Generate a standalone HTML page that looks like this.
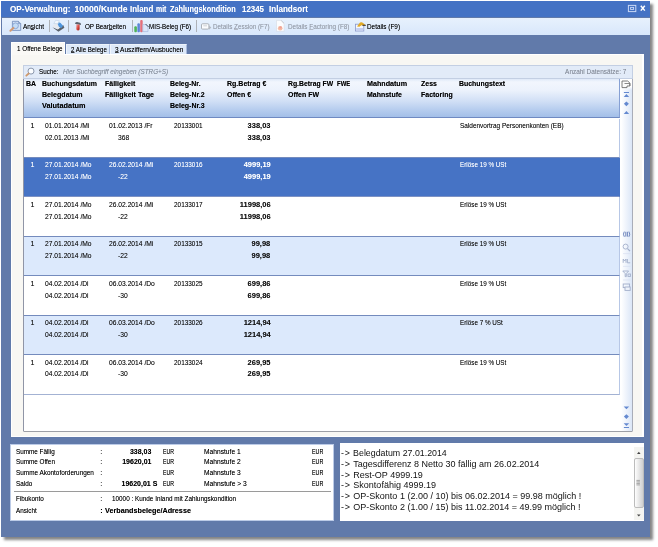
<!DOCTYPE html>
<html lang="de">
<head>
<meta charset="utf-8">
<title>OP-Verwaltung</title>
<style>
html,body{margin:0;padding:0;background:#fff;}
body{width:658px;height:547px;position:relative;overflow:hidden;font-family:"Liberation Sans",sans-serif;}
.abs,.t,.row{position:absolute;}
.t{white-space:pre;line-height:12px;color:#000;transform-origin:0 50%;text-shadow:0 0 0.4px color-mix(in srgb,currentColor 45%,transparent);}
.t u{text-decoration-thickness:0.6px;text-underline-offset:0px;text-decoration-color:rgba(0,0,0,.55);}
.t.g u{text-decoration-color:#b3bac6;}
#txt{position:absolute;left:0;top:0;width:658px;height:547px;will-change:transform;}
#win{left:1px;top:1px;width:649px;height:536px;background:#617aaa;box-shadow:3px 3px 2.5px rgba(0,0,0,.48);}
#title{left:1px;top:1px;width:649px;height:15.8px;background:#4472c4;}
#tool{left:2.3px;top:17.7px;width:647.4px;height:17.6px;background:linear-gradient(#e7f1fd,#d8e7fb);}
.sep{position:absolute;top:19.5px;width:1px;height:12.5px;background:#aeb2b8;}
#panel{left:10.6px;top:54px;width:633.4px;height:382.5px;background:#f8f7f3;border:1px solid #fff;border-right-width:2px;box-sizing:border-box;}
.tab{position:absolute;box-sizing:border-box;}
#tab1{left:10.6px;top:42.3px;width:54.9px;height:13px;background:#faf9f6;border:1px solid #fff;border-bottom:none;}
#tab2{left:65.8px;top:44px;width:44px;height:10.2px;background:#dde9f9;border-left:1px solid #f0f5fc;border-top:1px solid #edf3fb;border-right:1px solid #a7b9db;}
#tab3{left:109.8px;top:44px;width:77.6px;height:10.2px;background:#dde9f9;border-left:1px solid #f0f5fc;border-top:1px solid #edf3fb;border-right:1px solid #a7b9db;}
#search{left:22.5px;top:64.7px;width:610px;height:14.3px;background:#e2ebf8;border:1px solid #c3cfe3;box-sizing:border-box;}
#grid{left:22.5px;top:79px;width:610px;height:352.7px;background:#fff;border:1px solid #a9adb8;border-left-color:#9095a6;border-bottom-color:#9d9fa6;border-radius:0 0 1.5px 1.5px;border-top:none;box-sizing:border-box;}
#head{left:23.5px;top:79px;width:596.3px;height:39.2px;border-right:1px solid #86a0d4;background:linear-gradient(#dfe9f8 0%,#f2f6fd 8%,#ecf2fc 30%,#cfdef5 60%,#b5ccee 82%,#a3bfe8 100%);border-bottom:1px solid #6f8ac2;box-sizing:border-box;}
#nav{left:620px;top:79px;width:11.7px;height:351.7px;background:linear-gradient(90deg,#fff 10%,#dbe6f7);}
#navtop{left:620px;top:79px;width:11.7px;height:11px;background:linear-gradient(#fff 70%,rgba(255,255,255,0));}
.row{left:23.5px;width:596.3px;background:#fff;border-bottom:1px solid #748bbd;border-right:1px solid #b7c7e6;box-sizing:border-box;}
.row.alt{background:#dce9fc;}
.row.sel{background:#4673c5;border-bottom-color:#7d92c4;border-right-color:#4673c5;}
.row.last{border-bottom-color:#a3b2d3;}
#bl{left:10px;top:443.5px;width:323.8px;height:77px;background:#fff;border:1px solid #bccbe7;box-sizing:border-box;}
#br{left:340.2px;top:443px;width:304px;height:77.6px;background:#fff;}
#blsep{left:13.5px;top:491px;width:317px;height:1px;background:#9a9a9a;}
#sb{left:634px;top:447px;width:10px;height:73px;background:#f4f4f1;}
#thumb{left:634px;top:458px;width:10px;height:50px;background:linear-gradient(90deg,#fefefe,#cfcfcf);border:1px solid #bcbcbc;border-radius:2px;box-sizing:border-box;}
</style>
</head>
<body>
<div id="win" class="abs"></div>
<div id="title" class="abs"></div>
<div id="tool" class="abs"></div>
<div class="sep" style="left:49px"></div>
<div class="sep" style="left:68.3px"></div>
<div class="sep" style="left:131.8px"></div>
<div class="sep" style="left:196.3px"></div>
<div id="panel" class="abs"></div>
<div id="tab1" class="tab"></div>
<div id="tab2" class="tab"></div>
<div id="tab3" class="tab"></div>
<div id="search" class="abs"></div>
<div id="grid" class="abs"></div>
<div id="head" class="abs"></div>
<div class="row" style="top:118.5px;height:39.43px"></div>
<div class="row sel" style="top:157.93px;height:39.43px"></div>
<div class="row" style="top:197.36px;height:39.43px"></div>
<div class="row alt" style="top:236.79px;height:39.43px"></div>
<div class="row" style="top:276.22px;height:39.43px"></div>
<div class="row alt" style="top:315.65px;height:39.43px"></div>
<div class="row last" style="top:355.08px;height:39.43px"></div>
<div id="nav" class="abs"></div>
<div id="navtop" class="abs"></div>
<div id="bl" class="abs"></div>
<div id="blsep" class="abs"></div>
<div id="br" class="abs"></div>
<div id="sb" class="abs"></div>
<div id="thumb" class="abs"></div>
<svg class="abs" style="left:0;top:0" width="658" height="547" viewBox="0 0 658 547">
<!-- title buttons -->
<rect x="628.4" y="5.4" width="7.4" height="6.2" fill="none" stroke="#c9d8f6" stroke-width="1"/>
<rect x="630.6" y="7.4" width="3" height="2" fill="#4472c4" stroke="#c9d8f6" stroke-width="0.9"/>
<path d="M640.8 5.7 L644.8 10.6 M644.8 5.7 L640.8 10.6" stroke="#fff" stroke-width="1.5" fill="none"/>
<!-- preview icon -->
<path d="M12.4 21.3 H18.4 L20.7 23.6 V30.4 H12.4 Z" fill="#d3e3f7" stroke="#6d88b8" stroke-width="0.8"/>
<path d="M18.4 21.3 V23.6 H20.7" fill="none" stroke="#6d88b8" stroke-width="0.7"/>
<circle cx="15.5" cy="25.8" r="2.9" fill="#c3dcf6" stroke="#7d9acb" stroke-width="0.8"/>
<path d="M13.4 28 L10.4 30.8" stroke="#d59a72" stroke-width="2" stroke-linecap="round"/>
<!-- printer icon -->
<defs><linearGradient id="hg" x1="0" x2="1" y1="0" y2="1"><stop offset="0" stop-color="#f2a4a4"/><stop offset="0.55" stop-color="#d8453c"/><stop offset="1" stop-color="#8e1f1c"/></linearGradient></defs>
<path d="M52.4 27.2 L58.4 31.7 L64.4 27.8 L63.2 25 L58 29.2 Z" fill="#5a626c"/>
<path d="M52.2 26.6 L55 23.4 L59.2 24.4 L60.2 27.4 L57.6 29.6 Z" fill="#e6eaf0"/>
<path d="M58 22 L60.6 23 L63 25.8 L61.4 27.9 L59 26.9 L57.6 23.8 Z" fill="#4f96dc"/>
<path d="M53.8 23.6 L55.6 20.3 L59.3 20.7 L58.2 23.7 Z" fill="#f1f7fd" stroke="#b4c8e0" stroke-width="0.5"/>
<!-- hammer -->
<path d="M74.9 23.6 Q75.2 22 77 22.1 L80 22.7 Q81.2 23.2 80.9 25 L79.4 24.8 L76.4 24.3 Z" fill="#59626d"/>
<path d="M76.3 24.4 H79.6 V29 Q79.4 30.5 77.9 30.5 Q76.3 30.4 76.3 29 Z" fill="url(#hg)"/>
<!-- chart icon -->
<rect x="134.3" y="26.3" width="2.6" height="5.9" rx="1" fill="#4fb45a"/>
<rect x="137.4" y="23.3" width="2.5" height="8.9" rx="1" fill="#5d86d6"/>
<rect x="140.2" y="20" width="2.5" height="12.2" rx="1" fill="#e46f7a"/>
<path d="M142.8 24.6 H146 L148 26.6 V31.6 H142.8 Z" fill="#dbe6f8" stroke="#9eb2da" stroke-width="0.6"/>
<path d="M145.6 24 L148.6 27" stroke="#3b4453" stroke-width="0.9"/>
<!-- zession icon (gray) -->
<rect x="201.5" y="23.8" width="7.4" height="5.3" rx="1" fill="#fbfcfe" stroke="#a4a9b0" stroke-width="0.9"/>
<path d="M203.3 25.8 H207" stroke="#c3c7cc" stroke-width="0.8"/>
<path d="M209 25.6 L211.3 27.6 L209 29.8 Z" fill="#b4b9c0"/>
<!-- factoring icon (gray) -->
<path d="M276.5 20.4 H281.4 L284.1 23.2 V31.3 H276.5 Z" fill="#fbfcfe" stroke="#d5dae2" stroke-width="0.6"/>
<path d="M281.2 20.6 L284 23.4" stroke="#b9bec6" stroke-width="0.8"/>
<circle cx="280.2" cy="28.2" r="2.3" fill="#f5bca6"/>
<circle cx="280.5" cy="27.4" r="1.2" fill="#f0a194"/>
<!-- details icon -->
<rect x="355.5" y="24.2" width="8.3" height="6.8" fill="#f4f7fd" stroke="#8796ca" stroke-width="0.8"/>
<rect x="356.2" y="28" width="7" height="2.6" fill="#c5cff0"/>
<path d="M357 26.4 L360 22.6 Q362 21.6 363 23 L365.6 25.2 L361.5 25.2 L359.4 26.8 Z" fill="#e2aa25"/>
<path d="M362.4 24.8 L365.8 24.8 L365.8 25.8 L362.4 25.8 Z" fill="#3a2f22"/>
<!-- search magnifier -->
<circle cx="31" cy="71.1" r="3" fill="#fbfdff" stroke="#8b98ad" stroke-width="1"/>
<path d="M28.7 73.5 L26.3 75.7" stroke="#cf9a6c" stroke-width="1.8" stroke-linecap="round"/>
<!-- nav strip top -->
<path d="M622 81 H627.6 L629.9 83 V86 H627 V87.6 H622 Z" fill="#fcfcfc" stroke="#6d6d6d" stroke-width="0.9"/>
<path d="M624.5 83.5 H629.8 V86" fill="none" stroke="#6d6d6d" stroke-width="0.8"/>
<g fill="#6489d0">
<rect x="623.9" y="92" width="5.1" height="1"/>
<path d="M623.7 96.9 L626.4 94 L629.2 96.9 Z"/>
<path d="M623.9 103.8 L626.4 101.4 L628.9 103.8 L626.4 106.2 Z"/>
<path d="M623.7 113.9 L626.4 111 L629.2 113.9 Z"/>
<path d="M623.7 406.4 L626.4 409.3 L629.2 406.4 Z"/>
<path d="M623.9 416.6 L626.4 414.2 L628.9 416.6 L626.4 419 Z"/>
<path d="M623.7 423.2 L626.4 426.1 L629.2 423.2 Z"/>
<rect x="623.9" y="427" width="5.1" height="1"/>
</g>
<!-- nav strip middle icons -->
<g fill="none" stroke="#6f86bd" stroke-width="1">
<path d="M624.3 231.6 Q622.6 234.2 624.3 236.8"/>
<path d="M628.9 231.6 Q630.6 234.2 628.9 236.8"/>
<path d="M625.8 231.8 V236.6 M627.4 231.8 V236.6"/>
</g>
<g fill="none" stroke="#a3afcb" stroke-width="0.9">
<circle cx="625.6" cy="246.6" r="2.5"/>
<path d="M627.5 248.6 L630 251.2" stroke-width="1.2"/>
<path d="M623 253.6 H630.4" stroke="#d3dcee" stroke-width="0.6"/>
<path d="M623.2 262.8 V259 L624.6 261 L626 259 V262.8 M627.4 259 V262.8 H630.2" />
<path d="M623 266.4 H630.4" stroke="#d3dcee" stroke-width="0.6"/>
<path d="M622.8 271 H628.6 L626.3 273.6 V276.6 H625.2 V273.6 Z"/>
<rect x="628" y="274" width="2.4" height="2.4"/>
<path d="M623 280 H630.4" stroke="#d3dcee" stroke-width="0.6"/>
<rect x="623.2" y="284" width="6.4" height="3.6"/>
<rect x="625" y="287" width="5.2" height="3.4" fill="#eef3fb"/>
</g>
<!-- scrollbar arrows -->
<path d="M637 454 L638.8 451.8 L640.6 454 Z" fill="#444"/>
<path d="M637 514.4 L638.8 516.6 L640.6 514.4 Z" fill="#444"/>
<path d="M636.4 480.4 H639.9 M636.4 481.9 H639.9 M636.4 483.4 H639.9 M636.4 484.9 H639.9" stroke="#858585" stroke-width="0.7"/>
</svg>

<div id="txt">
<span class="t" style="left:9.9px;top:3px;font-size:8.6px;transform:scaleX(0.943);font-weight:bold;color:#fff;">OP-Verwaltung:</span>
<span class="t" style="left:74.6px;top:3px;font-size:8.6px;font-weight:bold;color:#fff;">10000/Kunde</span>
<span class="t" style="left:130.4px;top:3px;font-size:8.6px;transform:scaleX(0.920);font-weight:bold;color:#fff;">Inland</span>
<span class="t" style="left:156.2px;top:3px;font-size:8.6px;transform:scaleX(0.806);font-weight:bold;color:#fff;">mit</span>
<span class="t" style="left:169.9px;top:3px;font-size:8.6px;transform:scaleX(0.854);font-weight:bold;color:#fff;">Zahlungskondition</span>
<span class="t" style="left:242.4px;top:3px;font-size:8.6px;transform:scaleX(0.916);font-weight:bold;color:#fff;">12345</span>
<span class="t" style="left:269.1px;top:3px;font-size:8.6px;transform:scaleX(0.938);font-weight:bold;color:#fff;">Inlandsort</span>
<span class="t" style="left:22.8px;top:21px;font-size:7.2px;transform:scaleX(0.894);">An<u>s</u>icht</span>
<span class="t" style="left:85.0px;top:21px;font-size:7.2px;transform:scaleX(0.871);">OP Bear<u>b</u>eiten</span>
<span class="t" style="left:148.8px;top:21px;font-size:7.2px;transform:scaleX(0.865);">MIS-Beleg (F6)</span>
<span class="t g" style="left:213.3px;top:21px;font-size:7.2px;transform:scaleX(0.880);color:#959ca8;">Details <u>Z</u>ession (F7)</span>
<span class="t g" style="left:287.8px;top:21px;font-size:7.2px;transform:scaleX(0.890);color:#959ca8;">Details <u>F</u>actoring (F8)</span>
<span class="t" style="left:367.4px;top:21px;font-size:7.2px;transform:scaleX(0.890);">Details (F9)</span>
<span class="t" style="left:16.7px;top:43px;font-size:7.2px;transform:scaleX(0.878);">1 Offene Belege</span>
<span class="t" style="left:71.0px;top:44px;font-size:7.2px;transform:scaleX(0.856);"><u>2</u> Alle Belege</span>
<span class="t" style="left:115.4px;top:44px;font-size:7.2px;transform:scaleX(0.908);"><u>3</u> Ausziffern/Ausbuchen</span>
<span class="t" style="left:38.8px;top:66px;font-size:7.2px;transform:scaleX(0.870);">Suche:</span>
<span class="t" style="left:63.4px;top:66px;font-size:7.2px;transform:scaleX(0.885);font-style:italic;color:#848d9b;">Hier Suchbegriff eingeben (STRG+S)</span>
<span class="t" style="right:31.9px;top:66px;font-size:7.2px;transform-origin:100% 50%;transform:scaleX(0.896);color:#858c99;">Anzahl Datensätze: 7</span>
<span class="t" style="left:26.0px;top:78px;font-size:7.3px;transform:scaleX(0.955);font-weight:bold;">BA</span>
<span class="t" style="left:42.1px;top:78px;font-size:7.3px;transform:scaleX(0.955);font-weight:bold;">Buchungsdatum</span>
<span class="t" style="left:42.1px;top:89px;font-size:7.3px;transform:scaleX(0.972);font-weight:bold;">Belegdatum</span>
<span class="t" style="left:42.1px;top:100px;font-size:7.3px;transform:scaleX(1.004);font-weight:bold;">Valutadatum</span>
<span class="t" style="left:105.4px;top:78px;font-size:7.3px;transform:scaleX(0.955);font-weight:bold;">Fälligkeit</span>
<span class="t" style="left:105.4px;top:89px;font-size:7.3px;transform:scaleX(0.979);font-weight:bold;">Fälligkeit Tage</span>
<span class="t" style="left:170.0px;top:78px;font-size:7.3px;transform:scaleX(0.955);font-weight:bold;">Beleg-Nr.</span>
<span class="t" style="left:170.0px;top:89px;font-size:7.3px;transform:scaleX(0.961);font-weight:bold;">Beleg-Nr.2</span>
<span class="t" style="left:170.0px;top:100px;font-size:7.3px;transform:scaleX(0.961);font-weight:bold;">Beleg-Nr.3</span>
<span class="t" style="left:227.4px;top:78px;font-size:7.3px;transform:scaleX(0.962);font-weight:bold;">Rg.Betrag €</span>
<span class="t" style="left:227.4px;top:89px;font-size:7.3px;transform:scaleX(0.955);font-weight:bold;">Offen €</span>
<span class="t" style="left:287.9px;top:78px;font-size:7.3px;transform:scaleX(0.935);font-weight:bold;">Rg.Betrag FW</span>
<span class="t" style="left:287.9px;top:89px;font-size:7.3px;transform:scaleX(0.955);font-weight:bold;">Offen FW</span>
<span class="t" style="left:336.7px;top:78px;font-size:7.3px;transform:scaleX(0.814);font-weight:bold;">FWE</span>
<span class="t" style="left:366.5px;top:78px;font-size:7.3px;transform:scaleX(0.979);font-weight:bold;">Mahndatum</span>
<span class="t" style="left:366.5px;top:89px;font-size:7.3px;transform:scaleX(0.955);font-weight:bold;">Mahnstufe</span>
<span class="t" style="left:420.7px;top:78px;font-size:7.3px;transform:scaleX(0.955);font-weight:bold;">Zess</span>
<span class="t" style="left:420.7px;top:89px;font-size:7.3px;transform:scaleX(0.955);font-weight:bold;">Factoring</span>
<span class="t" style="left:458.7px;top:78px;font-size:7.3px;transform:scaleX(0.949);font-weight:bold;">Buchungstext</span>
<span class="t" style="left:30.6px;top:120px;font-size:7.1px;color:#111;">1</span>
<span class="t" style="left:45.4px;top:120px;font-size:7.1px;transform:scaleX(0.945);color:#111;">01.01.2014 /Mi</span>
<span class="t" style="left:45.4px;top:132px;font-size:7.1px;transform:scaleX(0.945);color:#111;">02.01.2013 /Mi</span>
<span class="t" style="left:109.2px;top:120px;font-size:7.1px;transform:scaleX(0.945);color:#111;">01.02.2013 /Fr</span>
<span class="t" style="left:117.5px;top:132px;font-size:7.1px;transform:scaleX(0.945);color:#111;">368</span>
<span class="t" style="left:173.8px;top:120px;font-size:7.1px;transform:scaleX(0.905);color:#111;">20133001</span>
<span class="t" style="right:387.6px;top:120px;font-size:7.7px;transform-origin:100% 50%;transform:scaleX(0.975);font-weight:bold;color:#111;">338,03</span>
<span class="t" style="right:387.6px;top:132px;font-size:7.7px;transform-origin:100% 50%;transform:scaleX(0.975);font-weight:bold;color:#111;">338,03</span>
<span class="t" style="left:459.7px;top:120px;font-size:7.1px;transform:scaleX(0.909);color:#111;">Saldenvortrag Personenkonten (EB)</span>
<span class="t" style="left:30.6px;top:159px;font-size:7.1px;color:#fff;">1</span>
<span class="t" style="left:45.4px;top:159px;font-size:7.1px;transform:scaleX(0.945);color:#fff;">27.01.2014 /Mo</span>
<span class="t" style="left:45.4px;top:171px;font-size:7.1px;transform:scaleX(0.945);color:#fff;">27.01.2014 /Mo</span>
<span class="t" style="left:109.2px;top:159px;font-size:7.1px;transform:scaleX(0.945);color:#fff;">26.02.2014 /Mi</span>
<span class="t" style="left:117.5px;top:171px;font-size:7.1px;transform:scaleX(0.945);color:#fff;">-22</span>
<span class="t" style="left:173.8px;top:159px;font-size:7.1px;transform:scaleX(0.905);color:#fff;">20133016</span>
<span class="t" style="right:387.6px;top:159px;font-size:7.7px;transform-origin:100% 50%;transform:scaleX(0.975);font-weight:bold;color:#fff;">4999,19</span>
<span class="t" style="right:387.6px;top:171px;font-size:7.7px;transform-origin:100% 50%;transform:scaleX(0.975);font-weight:bold;color:#fff;">4999,19</span>
<span class="t" style="left:459.7px;top:159px;font-size:7.1px;transform:scaleX(0.890);color:#fff;">Erlöse 19 % USt</span>
<span class="t" style="left:30.6px;top:199px;font-size:7.1px;color:#111;">1</span>
<span class="t" style="left:45.4px;top:199px;font-size:7.1px;transform:scaleX(0.945);color:#111;">27.01.2014 /Mo</span>
<span class="t" style="left:45.4px;top:211px;font-size:7.1px;transform:scaleX(0.945);color:#111;">27.01.2014 /Mo</span>
<span class="t" style="left:109.2px;top:199px;font-size:7.1px;transform:scaleX(0.945);color:#111;">26.02.2014 /Mi</span>
<span class="t" style="left:117.5px;top:211px;font-size:7.1px;transform:scaleX(0.945);color:#111;">-22</span>
<span class="t" style="left:173.8px;top:199px;font-size:7.1px;transform:scaleX(0.905);color:#111;">20133017</span>
<span class="t" style="right:387.6px;top:199px;font-size:7.7px;transform-origin:100% 50%;transform:scaleX(0.975);font-weight:bold;color:#111;">11998,06</span>
<span class="t" style="right:387.6px;top:211px;font-size:7.7px;transform-origin:100% 50%;transform:scaleX(0.975);font-weight:bold;color:#111;">11998,06</span>
<span class="t" style="left:459.7px;top:199px;font-size:7.1px;transform:scaleX(0.890);color:#111;">Erlöse 19 % USt</span>
<span class="t" style="left:30.6px;top:238px;font-size:7.1px;color:#111;">1</span>
<span class="t" style="left:45.4px;top:238px;font-size:7.1px;transform:scaleX(0.945);color:#111;">27.01.2014 /Mo</span>
<span class="t" style="left:45.4px;top:250px;font-size:7.1px;transform:scaleX(0.945);color:#111;">27.01.2014 /Mo</span>
<span class="t" style="left:109.2px;top:238px;font-size:7.1px;transform:scaleX(0.945);color:#111;">26.02.2014 /Mi</span>
<span class="t" style="left:117.5px;top:250px;font-size:7.1px;transform:scaleX(0.945);color:#111;">-22</span>
<span class="t" style="left:173.8px;top:238px;font-size:7.1px;transform:scaleX(0.905);color:#111;">20133015</span>
<span class="t" style="right:387.6px;top:238px;font-size:7.7px;transform-origin:100% 50%;transform:scaleX(0.975);font-weight:bold;color:#111;">99,98</span>
<span class="t" style="right:387.6px;top:250px;font-size:7.7px;transform-origin:100% 50%;transform:scaleX(0.975);font-weight:bold;color:#111;">99,98</span>
<span class="t" style="left:459.7px;top:238px;font-size:7.1px;transform:scaleX(0.890);color:#111;">Erlöse 19 % USt</span>
<span class="t" style="left:30.6px;top:278px;font-size:7.1px;color:#111;">1</span>
<span class="t" style="left:45.4px;top:278px;font-size:7.1px;transform:scaleX(0.945);color:#111;">04.02.2014 /Di</span>
<span class="t" style="left:45.4px;top:290px;font-size:7.1px;transform:scaleX(0.945);color:#111;">04.02.2014 /Di</span>
<span class="t" style="left:109.2px;top:278px;font-size:7.1px;transform:scaleX(0.945);color:#111;">06.03.2014 /Do</span>
<span class="t" style="left:117.5px;top:290px;font-size:7.1px;transform:scaleX(0.945);color:#111;">-30</span>
<span class="t" style="left:173.8px;top:278px;font-size:7.1px;transform:scaleX(0.905);color:#111;">20133025</span>
<span class="t" style="right:387.6px;top:278px;font-size:7.7px;transform-origin:100% 50%;transform:scaleX(0.975);font-weight:bold;color:#111;">699,86</span>
<span class="t" style="right:387.6px;top:290px;font-size:7.7px;transform-origin:100% 50%;transform:scaleX(0.975);font-weight:bold;color:#111;">699,86</span>
<span class="t" style="left:459.7px;top:278px;font-size:7.1px;transform:scaleX(0.890);color:#111;">Erlöse 19 % USt</span>
<span class="t" style="left:30.6px;top:317px;font-size:7.1px;color:#111;">1</span>
<span class="t" style="left:45.4px;top:317px;font-size:7.1px;transform:scaleX(0.945);color:#111;">04.02.2014 /Di</span>
<span class="t" style="left:45.4px;top:329px;font-size:7.1px;transform:scaleX(0.945);color:#111;">04.02.2014 /Di</span>
<span class="t" style="left:109.2px;top:317px;font-size:7.1px;transform:scaleX(0.945);color:#111;">06.03.2014 /Do</span>
<span class="t" style="left:117.5px;top:329px;font-size:7.1px;transform:scaleX(0.945);color:#111;">-30</span>
<span class="t" style="left:173.8px;top:317px;font-size:7.1px;transform:scaleX(0.905);color:#111;">20133026</span>
<span class="t" style="right:387.6px;top:317px;font-size:7.7px;transform-origin:100% 50%;transform:scaleX(0.975);font-weight:bold;color:#111;">1214,94</span>
<span class="t" style="right:387.6px;top:329px;font-size:7.7px;transform-origin:100% 50%;transform:scaleX(0.975);font-weight:bold;color:#111;">1214,94</span>
<span class="t" style="left:459.7px;top:317px;font-size:7.1px;transform:scaleX(0.890);color:#111;">Erlöse 7 % USt</span>
<span class="t" style="left:30.6px;top:357px;font-size:7.1px;color:#111;">1</span>
<span class="t" style="left:45.4px;top:357px;font-size:7.1px;transform:scaleX(0.945);color:#111;">04.02.2014 /Di</span>
<span class="t" style="left:45.4px;top:368px;font-size:7.1px;transform:scaleX(0.945);color:#111;">04.02.2014 /Di</span>
<span class="t" style="left:109.2px;top:357px;font-size:7.1px;transform:scaleX(0.945);color:#111;">06.03.2014 /Do</span>
<span class="t" style="left:117.5px;top:368px;font-size:7.1px;transform:scaleX(0.945);color:#111;">-30</span>
<span class="t" style="left:173.8px;top:357px;font-size:7.1px;transform:scaleX(0.905);color:#111;">20133024</span>
<span class="t" style="right:387.6px;top:357px;font-size:7.7px;transform-origin:100% 50%;transform:scaleX(0.975);font-weight:bold;color:#111;">269,95</span>
<span class="t" style="right:387.6px;top:368px;font-size:7.7px;transform-origin:100% 50%;transform:scaleX(0.975);font-weight:bold;color:#111;">269,95</span>
<span class="t" style="left:459.7px;top:357px;font-size:7.1px;transform:scaleX(0.890);color:#111;">Erlöse 19 % USt</span>
<span class="t" style="left:15.7px;top:446px;font-size:7.2px;transform:scaleX(0.880);">Summe Fällig</span>
<span class="t" style="left:100.2px;top:446px;font-size:7.2px;">:</span>
<span class="t" style="right:506.2px;top:446px;font-size:7.3px;transform-origin:100% 50%;transform:scaleX(0.960);font-weight:bold;">338,03</span>
<span class="t" style="left:162.6px;top:446px;font-size:7.2px;transform:scaleX(0.730);">EUR</span>
<span class="t" style="left:204.3px;top:446px;font-size:7.2px;transform:scaleX(0.926);">Mahnstufe 1</span>
<span class="t" style="left:312.4px;top:446px;font-size:7.2px;transform:scaleX(0.750);">EUR</span>
<span class="t" style="left:15.7px;top:456px;font-size:7.2px;transform:scaleX(0.880);">Summe Offen</span>
<span class="t" style="left:100.2px;top:456px;font-size:7.2px;">:</span>
<span class="t" style="right:506.2px;top:456px;font-size:7.3px;transform-origin:100% 50%;transform:scaleX(0.960);font-weight:bold;">19620,01</span>
<span class="t" style="left:162.6px;top:456px;font-size:7.2px;transform:scaleX(0.730);">EUR</span>
<span class="t" style="left:204.3px;top:456px;font-size:7.2px;transform:scaleX(0.926);">Mahnstufe 2</span>
<span class="t" style="left:312.4px;top:456px;font-size:7.2px;transform:scaleX(0.750);">EUR</span>
<span class="t" style="left:15.7px;top:467px;font-size:7.2px;transform:scaleX(0.890);">Summe Akontoforderungen</span>
<span class="t" style="left:100.2px;top:467px;font-size:7.2px;">:</span>
<span class="t" style="left:162.6px;top:467px;font-size:7.2px;transform:scaleX(0.730);">EUR</span>
<span class="t" style="left:204.3px;top:467px;font-size:7.2px;transform:scaleX(0.926);">Mahnstufe 3</span>
<span class="t" style="left:312.4px;top:467px;font-size:7.2px;transform:scaleX(0.750);">EUR</span>
<span class="t" style="left:15.7px;top:478px;font-size:7.2px;transform:scaleX(0.880);">Saldo</span>
<span class="t" style="left:100.2px;top:478px;font-size:7.2px;">:</span>
<span class="t" style="right:500.4px;top:478px;font-size:7.3px;transform-origin:100% 50%;transform:scaleX(0.960);font-weight:bold;">19620,01 S</span>
<span class="t" style="left:162.6px;top:478px;font-size:7.2px;transform:scaleX(0.730);">EUR</span>
<span class="t" style="left:204.3px;top:478px;font-size:7.2px;transform:scaleX(0.936);">Mahnstufe &gt; 3</span>
<span class="t" style="left:312.4px;top:478px;font-size:7.2px;transform:scaleX(0.750);">EUR</span>
<span class="t" style="left:15.7px;top:493px;font-size:7.2px;transform:scaleX(0.880);">Fibukonto</span>
<span class="t" style="left:100.2px;top:493px;font-size:7.2px;">:</span>
<span class="t" style="left:111.6px;top:493px;font-size:7.2px;transform:scaleX(0.885);">10000 : Kunde Inland mit Zahlungskondition</span>
<span class="t" style="left:15.7px;top:505px;font-size:7.2px;transform:scaleX(0.880);">Ansicht</span>
<span class="t" style="left:100.2px;top:505px;font-size:7.3px;font-weight:bold;">:</span>
<span class="t" style="left:105.4px;top:505px;font-size:7.3px;transform:scaleX(0.990);font-weight:bold;">Verbandsbelege/Adresse</span>
<span class="t" style="left:341.0px;top:447px;font-size:9.0px;transform:scaleX(0.980);color:#111;text-shadow:none;"><span style="letter-spacing:0.8px">-&gt;</span> Belegdatum 27.01.2014</span>
<span class="t" style="left:341.0px;top:458px;font-size:9.0px;color:#111;text-shadow:none;"><span style="letter-spacing:0.8px">-&gt;</span> Tagesdifferenz 8 Netto 30 fällig am 26.02.2014</span>
<span class="t" style="left:341.0px;top:469px;font-size:9.0px;color:#111;text-shadow:none;"><span style="letter-spacing:0.8px">-&gt;</span> Rest-OP 4999.19</span>
<span class="t" style="left:341.0px;top:479px;font-size:9.0px;color:#111;text-shadow:none;"><span style="letter-spacing:0.8px">-&gt;</span> Skontofähig 4999.19</span>
<span class="t" style="left:341.0px;top:490px;font-size:9.0px;color:#111;text-shadow:none;"><span style="letter-spacing:0.8px">-&gt;</span> OP-Skonto 1 (2.00 / 10) bis 06.02.2014 = 99.98 möglich !</span>
<span class="t" style="left:341.0px;top:501px;font-size:9.0px;color:#111;text-shadow:none;"><span style="letter-spacing:0.8px">-&gt;</span> OP-Skonto 2 (1.00 / 15) bis 11.02.2014 = 49.99 möglich !</span>
</div>
</body>
</html>
